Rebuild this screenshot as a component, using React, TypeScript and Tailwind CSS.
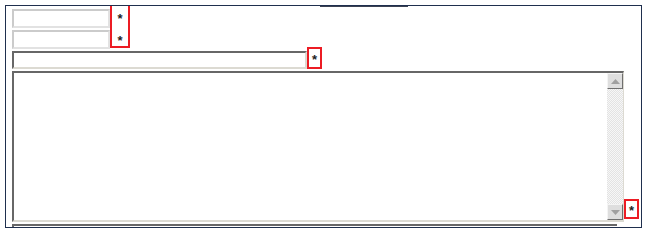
import { ReactNode } from 'react';

function Star({ className = '' }: { className?: string }) {
  return (
    <span className={`block text-[13px] font-bold leading-none text-[#1e1e1e] ${className}`}>*</span>
  );
}

function Flag({ className, children }: { className: string; children: ReactNode }) {
  return (
    <div className={`flex shrink-0 flex-col items-center border-2 border-[#ec1c24] ${className}`}>
      {children}
    </div>
  );
}

function ArrowButton({ up }: { up: boolean }) {
  return (
    <div className="flex h-[16px] w-[16px] items-center justify-center border border-t-[#f4f4f4] border-l-[#f4f4f4] border-r-[#6f6f6f] border-b-[#6f6f6f] bg-[#dedede]">
      <svg width="9" height="5" viewBox="0 0 9 5">
        <path d={up ? 'M0 5 L4.5 0 L9 5 Z' : 'M0 0 L4.5 5 L9 0 Z'} fill="#a0a0a0" />
      </svg>
    </div>
  );
}

export default function App() {
  return (
    <div className="h-[231px] w-[647px] bg-white pl-[5px] pt-[5px] font-['Liberation_Sans',Arial,sans-serif]">
      <div className="relative h-[223px] w-[637px] overflow-hidden border border-[#1f2f4e] pl-[6px] pt-[3px]">
        <div className="absolute -top-px left-[314px] h-[2px] w-[88px] bg-[#3b4252]" />

        <div className="flex items-start">
          <div className="flex flex-col gap-[2px]">
            <div className="h-[19px] w-[98px] border-2 border-t-[#cbcbcb] border-l-[#cbcbcb] border-r-[#e2e2e2] border-b-[#e2e2e2] bg-white" />
            <div className="h-[19px] w-[98px] border-2 border-t-[#cbcbcb] border-l-[#cbcbcb] border-r-[#e2e2e2] border-b-[#e2e2e2] bg-white" />
          </div>
          <Flag className="-mt-[5px] h-[44px] w-[20px] gap-[9px] pt-[6px]">
            <Star />
            <Star />
          </Flag>
        </div>

        <div className="mt-[2px] flex items-start">
          <div className="h-[18px] w-[295px] border-2 border-t-[#676767] border-l-[#676767] border-r-[#dcdad2] border-b-[#dcdad2] bg-white" />
          <Flag className="-mt-[4px] h-[22px] w-[15px] justify-center">
            <Star className="mt-[2px]" />
          </Flag>
        </div>

        <div className="mt-[2px] flex items-end">
          <div className="flex h-[151px] w-[612px] border-2 border-r border-t-[#676767] border-l-[#676767] border-r-[#dcdad2] border-b-[#dcdad2] bg-white">
            <div className="flex-1" />
            <div className="flex w-[16px] flex-col bg-[repeating-conic-gradient(#e3e3e3_0%_25%,#f7f7f7_0%_50%)] bg-[length:2px_2px]">
              <ArrowButton up />
              <div className="flex-1" />
              <ArrowButton up={false} />
            </div>
          </div>
          <Flag className="mb-[3px] h-[20px] w-[15px] justify-center">
            <Star className="mt-[2px]" />
          </Flag>
        </div>

        <div className="mt-[2px] h-[10px] w-[605px] border-t-2 border-l-2 border-[#676767] bg-white" />
      </div>
    </div>
  );
}
